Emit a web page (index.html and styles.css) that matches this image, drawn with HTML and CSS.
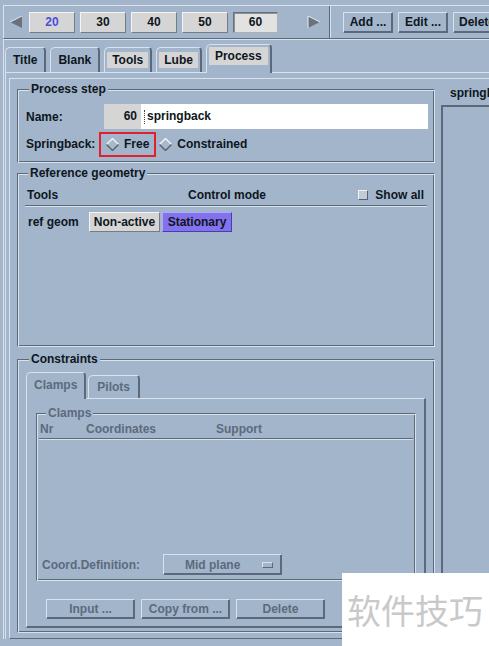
FILE: index.html
```html
<!DOCTYPE html>
<html>
<head>
<meta charset="utf-8">
<link rel="stylesheet" href="styles.css">
</head>
<body>
<div class="toolbar">
  <span class="arrow"><svg width="13" height="12" viewBox="0 0 13 12"><polygon points="12,0 12,12 0,6" fill="#6b727c"/><polyline points="12,0 0,6" stroke="#e6ecf2" stroke-width="1" fill="none"/></svg></span>
  <div class="steps">
    <button class="btn step cur">20</button>
    <button class="btn step">30</button>
    <button class="btn step">40</button>
    <button class="btn step">50</button>
    <button class="btn step sel">60</button>
  </div>
  <span class="arrow arrow-r"><svg width="13" height="12" viewBox="0 0 13 12"><polygon points="1,0 1,12 13,6" fill="#6b727c"/><polyline points="1,12 1,0 13,6" stroke="#e6ecf2" stroke-width="1" fill="none"/></svg></span>
  <span class="vsep"></span>
  <div class="acts">
    <button class="btn act">Add ...</button>
    <button class="btn act">Edit ...</button>
    <button class="btn act">Delete</button>
  </div>
</div>
<div class="main">
  <div class="tabs">
    <div class="tab"><span class="tab-label">Title</span></div>
    <div class="tab"><span class="tab-label">Blank</span></div>
    <div class="tab"><span class="tab-label grey">Tools</span></div>
    <div class="tab"><span class="tab-label grey">Lube</span></div>
    <div class="tab tab-sel"><span class="tab-label grey">Process</span></div>
  </div>
  <div class="tabpanel">
    <div class="page">
      <div class="left">
        <fieldset class="group g-step">
          <legend>Process step</legend>
          <div class="row name-row">
            <span class="lbl lbl-name">Name:</span>
            <span class="numbox">60</span>
            <span class="textfield"><span class="caret"></span>springback</span>
          </div>
          <div class="row spring-row">
            <span class="lbl lbl-spring">Springback:</span>
            <span class="radio"><svg width="13" height="13" viewBox="0 0 13 13"><polygon points="6.5,0.5 12.5,6.5 6.5,12.5 0.5,6.5" fill="#aab8c8"/><polyline points="0.5,6.5 6.5,0.5 12.5,6.5" stroke="#f2f5f8" stroke-width="1.4" fill="none"/><polyline points="0.5,6.5 6.5,12.5 12.5,6.5" stroke="#56616e" stroke-width="1.4" fill="none"/></svg></span>
            <span class="opt">Free</span>
            <span class="radio radio2"><svg width="13" height="13" viewBox="0 0 13 13"><polygon points="6.5,0.5 12.5,6.5 6.5,12.5 0.5,6.5" fill="#aab8c8"/><polyline points="0.5,6.5 6.5,0.5 12.5,6.5" stroke="#f2f5f8" stroke-width="1.4" fill="none"/><polyline points="0.5,6.5 6.5,12.5 12.5,6.5" stroke="#56616e" stroke-width="1.4" fill="none"/></svg></span>
            <span class="opt">Constrained</span>
          </div>
        </fieldset>

        <fieldset class="group g-ref">
          <legend>Reference geometry</legend>
          <div class="ref-head">
            <span class="col-tools">Tools</span>
            <span class="col-mode">Control mode</span>
            <span class="check"></span>
            <span class="col-show">Show all</span>
          </div>
          <div class="sep"></div>
          <div class="ref-row">
            <span class="col-ref">ref geom</span>
            <button class="btn gbtn w71">Non-active</button>
            <button class="btn gbtn purple">Stationary</button>
          </div>
        </fieldset>

        <fieldset class="group g-cons">
          <legend>Constraints</legend>
          <div class="itabs">
            <div class="itab itab-sel">Clamps</div>
            <div class="itab">Pilots</div>
          </div>
          <div class="ipanel">
            <fieldset class="group g-clamps">
              <legend class="dim">Clamps</legend>
              <div class="clamp-head dim">
                <span class="c-nr">Nr</span>
                <span class="c-coord">Coordinates</span>
                <span>Support</span>
              </div>
              <div class="sep sep-c"></div>
              <div class="clamp-list"></div>
              <div class="coord-row">
                <span class="c-def dim">Coord.Definition:</span>
                <button class="btn bbtn optmenu"><span class="dim">Mid plane</span><span class="ind"></span></button>
              </div>
            </fieldset>
            <div class="brow">
              <button class="btn bbtn wide dim">Input ...</button>
              <button class="btn bbtn wide dim">Copy from ...</button>
              <button class="btn bbtn wide dim">Delete</button>
            </div>
          </div>
        </fieldset>
      </div>
      <div class="right">
        <div class="rlabel">springback</div>
        <div class="rbox"></div>
      </div>
    </div>
  </div>
</div>
<div class="mark"></div>
<div class="watermark">软件技巧</div>
</body>
</html>
```

FILE: styles.css
```css
:root {
  --bg: #a2b5cb;
  --lt: #d8e2ec;
  --dk: #5b697b;
  --grey: #d5d5d5;
  --ink: #0e1620;
  --dim: #5c6a7d;
}
* { box-sizing: border-box; }
html, body {
  margin: 0;
  padding: 0;
  width: 489px;
  height: 646px;
  overflow: hidden;
  background: var(--bg);
  font-family: "Liberation Sans", Arial, sans-serif;
  font-size: 12px;
  font-weight: bold;
  color: var(--ink);
}
button {
  font: inherit;
  color: inherit;
  margin: 0;
  padding: 0;
}
.btn {
  height: 21px;
  border: 1px solid;
  border-color: #f4f4f4 #767c84 #767c84 #f4f4f4;
  background: var(--grey);
  display: inline-flex;
  align-items: center;
  justify-content: center;
  white-space: nowrap;
}

/* toolbar */
.toolbar {
  margin: 5px 0 0 3px;
  height: 34px;
  border-top: 1px solid var(--lt);
  border-left: 1px solid var(--lt);
  border-bottom: 1px solid var(--dk);
  display: flex;
  align-items: center;
  padding-left: 6px;
  white-space: nowrap;
  overflow: hidden;
}
.arrow { display: flex; width: 13px; height: 12px; }
.arrow-r { margin-left: 29px; }
.steps { display: flex; gap: 5px; margin-left: 6px; }
.step { width: 46px; }
.step.cur { color: #4c4ed8; }
.step.sel {
  width: 45px;
  background: #e2e2e2;
  border-color: #6a7078 #b0b0b0 #b0b0b0 #6a7078;
  box-shadow: inset 1px 1px 0 #8a9098;
}
.vsep {
  align-self: stretch;
  width: 2px;
  margin-left: 9px;
  border-left: 1px solid var(--dk);
  border-right: 1px solid var(--lt);
}
.acts { display: flex; gap: 5px; margin-left: 12px; }
.act {
  width: 50px;
  background: var(--bg);
  border-color: var(--lt) var(--dk) var(--dk) var(--lt);
  box-shadow: inset -1px -1px 0 var(--dk);
}
.acts .act:last-child { width: 60px; justify-content: flex-start; padding-left: 5px; }

/* main frame */
.main {
  margin-left: 3px;
  border-top: 1px solid var(--lt);
  border-left: 1px solid var(--lt);
}
.tabs {
  display: flex;
  align-items: flex-end;
  gap: 4px;
  height: 32px;
  padding-top: 4px;
  margin-left: 1px;
}
.tab {
  height: 25px;
  padding: 0 2px;
  border-top: 1px solid var(--lt);
  border-left: 1px solid var(--lt);
  border-right: 2px solid var(--dk);
  border-radius: 5px 4px 0 0;
  display: flex;
  align-items: center;
  position: relative;
  z-index: 1;
}
.tab-label {
  padding: 0 5px;
  height: 16px;
  line-height: 16px;
}
.tab-label.grey { background: var(--grey); }
.tab-sel {
  height: 29px;
  margin-bottom: -1px;
  background: var(--bg);
  align-items: flex-start;
  padding-top: 2px;
}
.tab-sel .tab-label { padding: 0 6px; height: 18px; line-height: 18px; }
.tabpanel {
  margin-left: 1px;
  border-top: 1px solid var(--lt);
  border-left: 1px solid var(--lt);
}
.page {
  margin: 5px 0 0 3px;
  border-top: 1px solid var(--lt);
  border-left: 1px solid var(--lt);
  border-bottom: 1px solid var(--dk);
  display: flex;
}
.left {
  width: 427px;
  flex: none;
  padding-bottom: 5px;
}
.right {
  flex: 1;
  display: flex;
  flex-direction: column;
  padding-top: 6px;
}
.rlabel {
  padding-left: 13px;
  line-height: 16px;
  height: 16px;
  margin-bottom: 4px;
}
.rbox {
  flex: 1;
  margin-left: 4px;
  margin-bottom: 4px;
  border-top: 2px solid var(--dk);
  border-left: 2px solid var(--dk);
}

/* groups */
.group {
  margin: 0 2px 0 7px;
  min-width: 0;
  border: 1px solid;
  border-color: var(--dk) var(--lt) var(--lt) var(--dk);
  box-shadow: inset 1px 1px 0 var(--lt), inset -1px -1px 0 var(--dk);
}
.group legend {
  padding: 0 2px;
  margin-left: 3px;
  line-height: 16px;
  height: 16px;
  background: var(--bg);
}
.row { display: flex; align-items: center; }
.lbl { flex: none; padding-left: 0; }

.g-step { margin-top: 2px; padding: 7px 6px 5px 8px; }
.name-row { height: 25px; }
.lbl-name { width: 78px; }
.numbox {
  width: 37px;
  height: 25px;
  background: var(--grey);
  text-align: right;
  padding-right: 4px;
  line-height: 25px;
}
.textfield {
  flex: 1;
  height: 25px;
  background: #ffffff;
  line-height: 25px;
  padding-left: 3px;
  display: flex;
  align-items: center;
}
.caret {
  width: 2px;
  height: 14px;
  border-left: 1px dotted #404040;
  margin-right: 1px;
}
.spring-row { height: 26px; margin-top: 2px; }
.lbl-spring { width: 80px; }
.radio { display: flex; width: 13px; height: 13px; margin-right: 5px; }
.radio2 { margin-left: 10px; }

.g-ref { margin-top: 2px; padding: 6px 7px 114px 7px; }
.ref-head {
  display: flex;
  align-items: center;
  height: 16px;
  line-height: 16px;
  padding-left: 2px;
  padding-right: 3px;
}
.col-tools { width: 161px; }
.col-mode { flex: 1; }
.check {
  width: 10px;
  height: 10px;
  background: #c2cad4;
  border: 1px solid;
  border-color: #f0f4f8 #5a6270 #5a6270 #f0f4f8;
  margin-right: 7px;
}
.sep {
  height: 2px;
  margin-top: 2px;
  border-top: 1px solid var(--dk);
  border-bottom: 1px solid var(--lt);
}
.ref-row {
  display: flex;
  align-items: center;
  gap: 2px;
  margin-top: 5px;
  height: 20px;
  padding-left: 3px;
}
.col-ref { width: 59px; }
.gbtn { height: 20px; }
.w71 { width: 71px; }
.purple {
  width: 70px;
  background: #8272ee;
  border-color: #b4aaf8 #4a3eaa #4a3eaa #b4aaf8;
}

.g-cons { margin-top: 4px; padding: 5px 8px 4px 8px; }
.dim { color: var(--dim); }
.itabs {
  display: flex;
  align-items: flex-end;
  gap: 2px;
  height: 26px;
}
.itab {
  height: 23px;
  padding: 0 8px;
  border-top: 1px solid var(--lt);
  border-left: 1px solid var(--lt);
  border-right: 2px solid var(--dk);
  border-radius: 5px 4px 0 0;
  color: var(--dim);
  display: flex;
  align-items: center;
  position: relative;
  z-index: 1;
}
.itab-sel {
  height: 27px;
  margin-bottom: -1px;
  padding: 0 7px 3px 7px;
  background: var(--bg);
}
.ipanel {
  border-top: 1px solid var(--lt);
  border-left: 1px solid var(--lt);
  border-right: 2px solid var(--dk);
  border-bottom: 2px solid var(--dk);
  padding: 6px 0 7px 0;
}
.g-clamps { margin: 0 8px 0 9px; padding: 0 3px 5px 3px; }
.g-clamps legend { margin-left: 6px; }
.clamp-head {
  display: flex;
  height: 17px;
  line-height: 17px;
}
.c-nr { width: 46px; }
.c-coord { width: 130px; }
.sep-c { margin: 0 -1px; }
.clamp-list { height: 114px; }
.coord-row { display: flex; align-items: center; height: 21px; padding-left: 2px; }
.c-def { width: 121px; }
.bbtn {
  background: var(--bg);
  border-color: var(--lt) var(--dk) var(--dk) var(--lt);
  box-shadow: inset -1px -1px 0 var(--dk);
}
.optmenu {
  width: 119px;
  justify-content: flex-start;
  padding-left: 21px;
}
.ind {
  width: 11px;
  height: 6px;
  margin-left: auto;
  margin-right: 8px;
  border: 1px solid;
  border-color: var(--lt) var(--dk) var(--dk) var(--lt);
}
.brow {
  display: flex;
  gap: 6px;
  margin-top: 18px;
  padding-left: 19px;
}
.wide { width: 89px; height: 20px; }

/* overlays */
.mark {
  position: absolute;
  left: 99px;
  top: 132px;
  width: 57px;
  height: 25px;
  border: 2px solid #e0202c;
}
.watermark {
  position: absolute;
  left: 342px;
  top: 573px;
  width: 147px;
  height: 73px;
  background: #ffffff;
  color: #c9c9c9;
  font-family: "Noto Sans CJK SC", sans-serif;
  font-weight: normal;
  font-size: 34px;
  line-height: 73px;
  padding-left: 5px;
  white-space: nowrap;
}
```
